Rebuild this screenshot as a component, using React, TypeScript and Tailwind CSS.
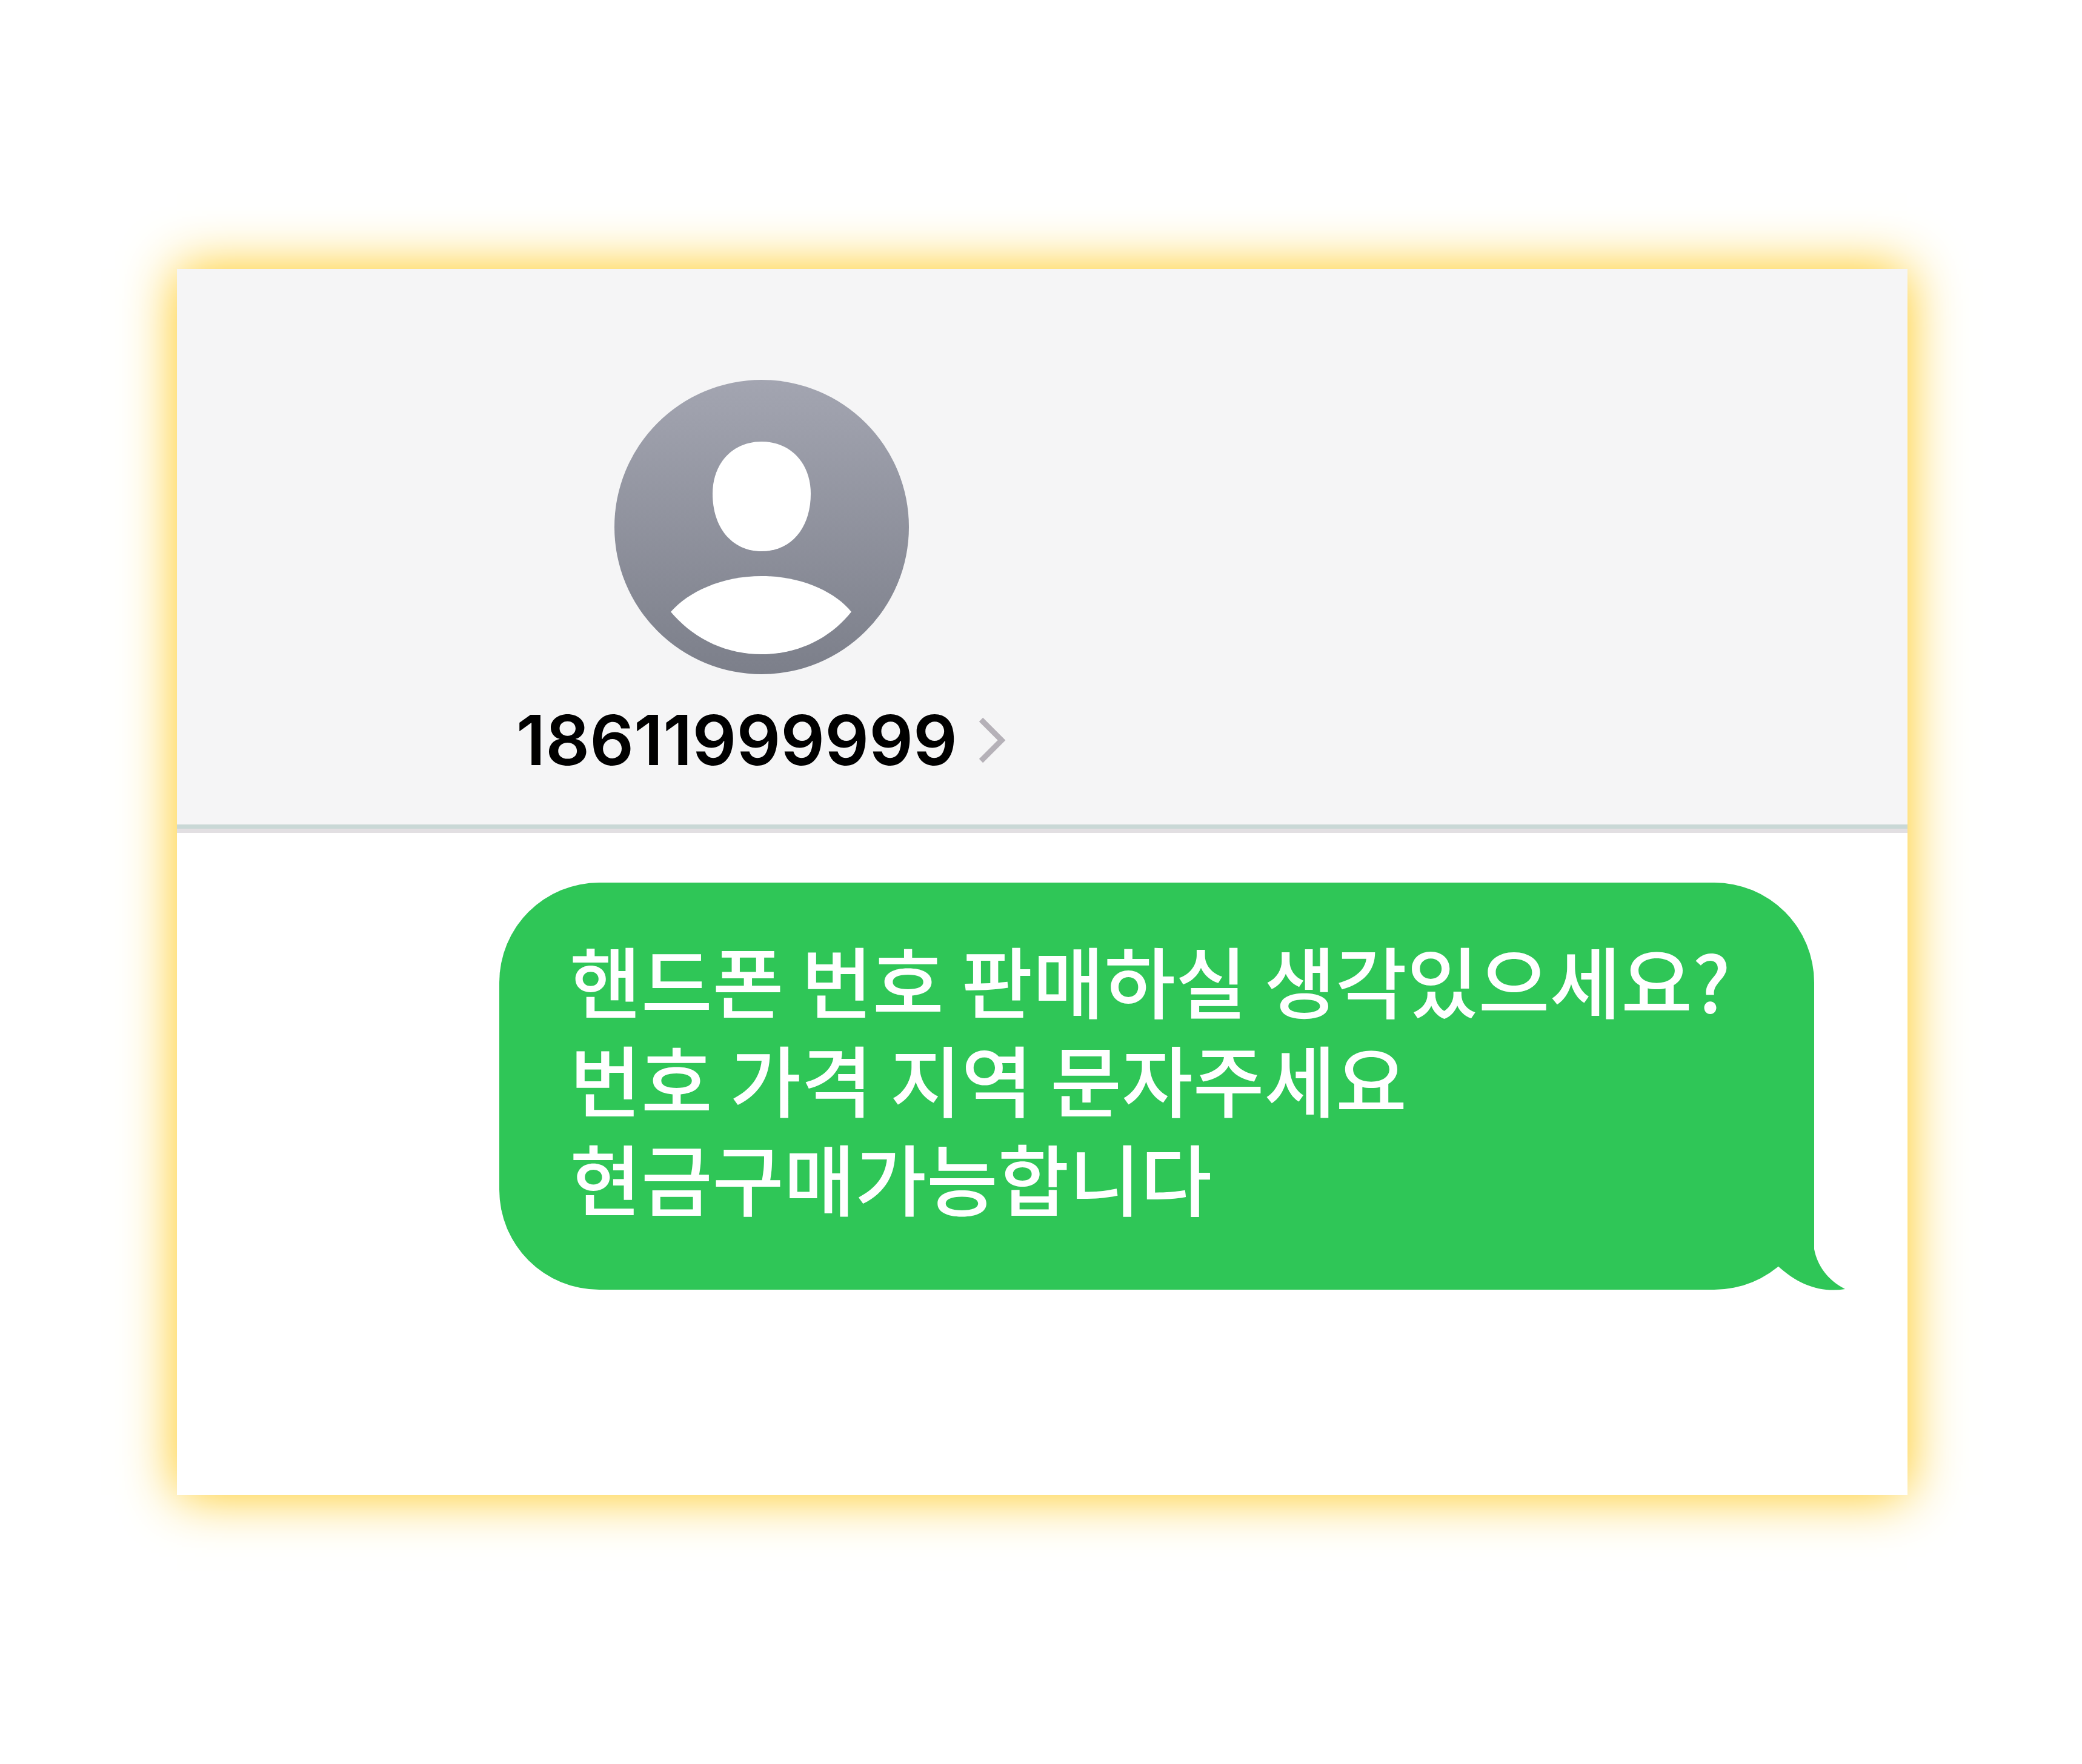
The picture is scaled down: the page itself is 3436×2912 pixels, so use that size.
const message = `핸드폰 번호 판매하실 생각있으세요?
번호 가격 지역 문자주세요
현금구매가능합니다`;

function Avatar() {
  return (
    <svg viewBox="0 0 486 486" className="size-[486px]" aria-hidden="true">
      <defs>
        <linearGradient id="avatar-fill" x1="0" y1="0" x2="0" y2="1">
          <stop offset="0" stopColor="#a3a5b1" />
          <stop offset="1" stopColor="#7c7f8a" />
        </linearGradient>
      </defs>
      <circle cx="243" cy="243" r="243" fill="url(#avatar-fill)" />
      <path
        d="M243 102C292 102 324 139 324 188C324 243 293 283 243 283C193 283 162 243 162 188C162 139 194 102 243 102Z"
        fill="#fff"
      />
      <path
        d="M243 324C309 324 364 350 391 383C356 427 303 453 243 453C183 453 130 427 93 383C122 350 177 324 243 324Z"
        fill="#fff"
      />
    </svg>
  );
}

function ContactHeader() {
  return (
    <header className="flex border-b-[7px] border-[#c9d8d6] bg-[#f5f5f6] pt-[183px] pb-[74px] pl-[560px]">
      <div className="flex flex-col items-center">
        <Avatar />
        <button
          type="button"
          className="mt-[44px] flex items-center gap-[34px] font-['Inter',sans-serif] text-[114px] leading-[130px] font-semibold text-black"
        >
          18611999999
          <svg viewBox="0 0 48 76" className="h-[76px] w-[48px]" fill="none" aria-hidden="true">
            <path d="M5 4L39 38L5 72" stroke="#b5b1b8" strokeWidth="9" />
          </svg>
        </button>
      </div>
    </header>
  );
}

function MessageBubble() {
  return (
    <div className="relative w-fit rounded-[165px] bg-[#2fc657] pt-[78px] pr-[138px] pb-[105px] pl-[116px]">
      <p className="font-['Noto_Sans_CJK_KR',sans-serif] text-[128px] leading-[163px] font-medium whitespace-pre text-white">
        {message}
      </p>
      <svg
        viewBox="0 0 156 176"
        className="absolute -right-[56px] bottom-[-4px] h-[176px] w-[156px]"
        aria-hidden="true"
      >
        <path
          d="M100 0V105C105 132 122 156 151 171C113 177 75 166 38 131V60Z"
          fill="#2fc657"
        />
      </svg>
    </div>
  );
}

export default function App() {
  return (
    <div className="min-h-screen bg-white py-[444px] pr-[288px] pl-[292px]">
      <main className="bg-white shadow-[0_0_84px_#ffc610]">
        <ContactHeader />
        <section className="flex justify-end border-t-[7px] border-[#e2dfe2] pt-[82px] pr-[154px] pb-[339px]">
          <MessageBubble />
        </section>
      </main>
    </div>
  );
}
